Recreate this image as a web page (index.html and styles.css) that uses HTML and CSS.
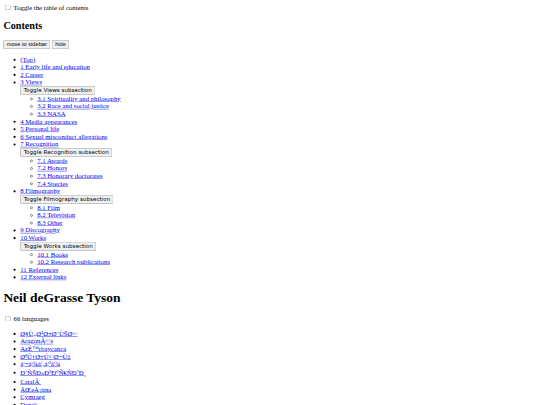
FILE: index.html
```html
<!DOCTYPE html>
<html lang="en">
<head>
<meta charset="utf-8">
<title>Neil deGrasse Tyson</title>
<link rel="stylesheet" href="styles.css">
</head>
<body class="page">
<div class="sheet">
<div class="toc-landmark">
  <input type="checkbox" id="toc-collapsed" class="toggle-box"> <label for="toc-collapsed" class="toc-label">Toggle the table of contents</label>
</div>
<nav class="toc" aria-label="Contents">
  <div class="toc-header">
    <h2 class="toc-title">Contents</h2>
    <button class="pin-btn">move to sidebar</button> <button class="pin-btn">hide</button>
  </div>
  <ul class="toc-list">
    <li><a href="#top"><div class="toc-text">(Top)</div></a></li>
    <li><a href="#early"><div class="toc-text">1 Early life and education</div></a></li>
    <li><a href="#career"><div class="toc-text">2 Career</div></a></li>
    <li><a href="#views"><div class="toc-text">3 Views</div></a>
      <button class="toc-toggle">Toggle Views subsection</button>
      <ul>
        <li><a href="#spirituality"><div class="toc-text">3.1 Spirituality and philosophy</div></a></li>
        <li><a href="#race"><div class="toc-text">3.2 Race and social justice</div></a></li>
        <li><a href="#nasa"><div class="toc-text">3.3 NASA</div></a></li>
      </ul>
    </li>
    <li><a href="#media"><div class="toc-text">4 Media appearances</div></a></li>
    <li><a href="#personal"><div class="toc-text">5 Personal life</div></a></li>
    <li><a href="#allegations"><div class="toc-text">6 Sexual misconduct allegations</div></a></li>
    <li><a href="#recognition"><div class="toc-text">7 Recognition</div></a>
      <button class="toc-toggle">Toggle Recognition subsection</button>
      <ul>
        <li><a href="#awards"><div class="toc-text">7.1 Awards</div></a></li>
        <li><a href="#honors"><div class="toc-text">7.2 Honors</div></a></li>
        <li><a href="#doctorates"><div class="toc-text">7.3 Honorary doctorates</div></a></li>
        <li><a href="#species"><div class="toc-text">7.4 Species</div></a></li>
      </ul>
    </li>
    <li><a href="#filmography"><div class="toc-text">8 Filmography</div></a>
      <button class="toc-toggle">Toggle Filmography subsection</button>
      <ul>
        <li><a href="#film"><div class="toc-text">8.1 Film</div></a></li>
        <li><a href="#television"><div class="toc-text">8.2 Television</div></a></li>
        <li><a href="#other"><div class="toc-text">8.3 Other</div></a></li>
      </ul>
    </li>
    <li><a href="#discography"><div class="toc-text">9 Discography</div></a></li>
    <li><a href="#works"><div class="toc-text">10 Works</div></a>
      <button class="toc-toggle">Toggle Works subsection</button>
      <ul>
        <li><a href="#books"><div class="toc-text">10.1 Books</div></a></li>
        <li><a href="#publications"><div class="toc-text">10.2 Research publications</div></a></li>
      </ul>
    </li>
    <li><a href="#references"><div class="toc-text">11 References</div></a></li>
    <li><a href="#links"><div class="toc-text">12 External links</div></a></li>
  </ul>
</nav>
<h1 class="page-title">Neil deGrasse Tyson</h1>
<div class="lang-menu">
  <input type="checkbox" id="lang-toggle" class="toggle-box"> <label for="lang-toggle">66 languages</label>
</div>
<ul class="lang-list">
  <li><a href="#ar">Ø§Ù„Ø¹Ø±Ø¨ÙŠØ©</a></li>
  <li><a href="#an">AragonÃ©s</a></li>
  <li><a href="#az">AzÉ™rbaycanca</a></li>
  <li><a href="#azb">ØªÛ†Ø±Ú©Ø¬Ù‡</a></li>
  <li><a href="#bn">à¦¬à¦¾à¦‚à¦²à¦¾</a></li>
  <li class="lang-tall"><a href="#bg">Ð‘ÑŠÐ»Ð³Ð°Ñ€ÑÐºÐ¸</a></li>
  <li><a href="#ca">CatalÃ&nbsp;</a></li>
  <li><a href="#cs">ÄŒeÅ¡tina</a></li>
  <li><a href="#cy">Cymraeg</a></li>
  <li><a href="#da">Dansk</a></li>
  <li><a href="#de">Deutsch</a></li>
  <li><a href="#et">Eesti</a></li>
</ul>
</div>
</body>
</html>
```

FILE: styles.css
```css
/* Full-size document, drawn at reduced scale from the top-left corner */
html {
  background: #fff;
  overflow: hidden;
}

.page {
  margin: 0;
}

.sheet {
  width: 1264px;
  padding: 8px;
  transform: scale(0.421875);
  transform-origin: 0 0;
  font-family: "Liberation Serif", "Times New Roman", serif;
  font-size: 16px;
  color: #000;
}

.pin-btn {
  font-family: "Liberation Sans", Arial, sans-serif;
  font-size: 13.333px;
}

.toc-toggle {
  font-family: "DejaVu Sans", sans-serif;
  font-size: 13.333px;
}

.toc-label {
  font-family: "Liberation Serif", serif;
  font-size: 16px;
}

.toc-title {
  font-size: 24px;
}

.page-title {
  font-size: 32px;
}

/* the Bulgarian entry carries a control byte whose fallback glyph sets a taller line */
.lang-tall {
  padding: 2px 0 4px;
}
```
